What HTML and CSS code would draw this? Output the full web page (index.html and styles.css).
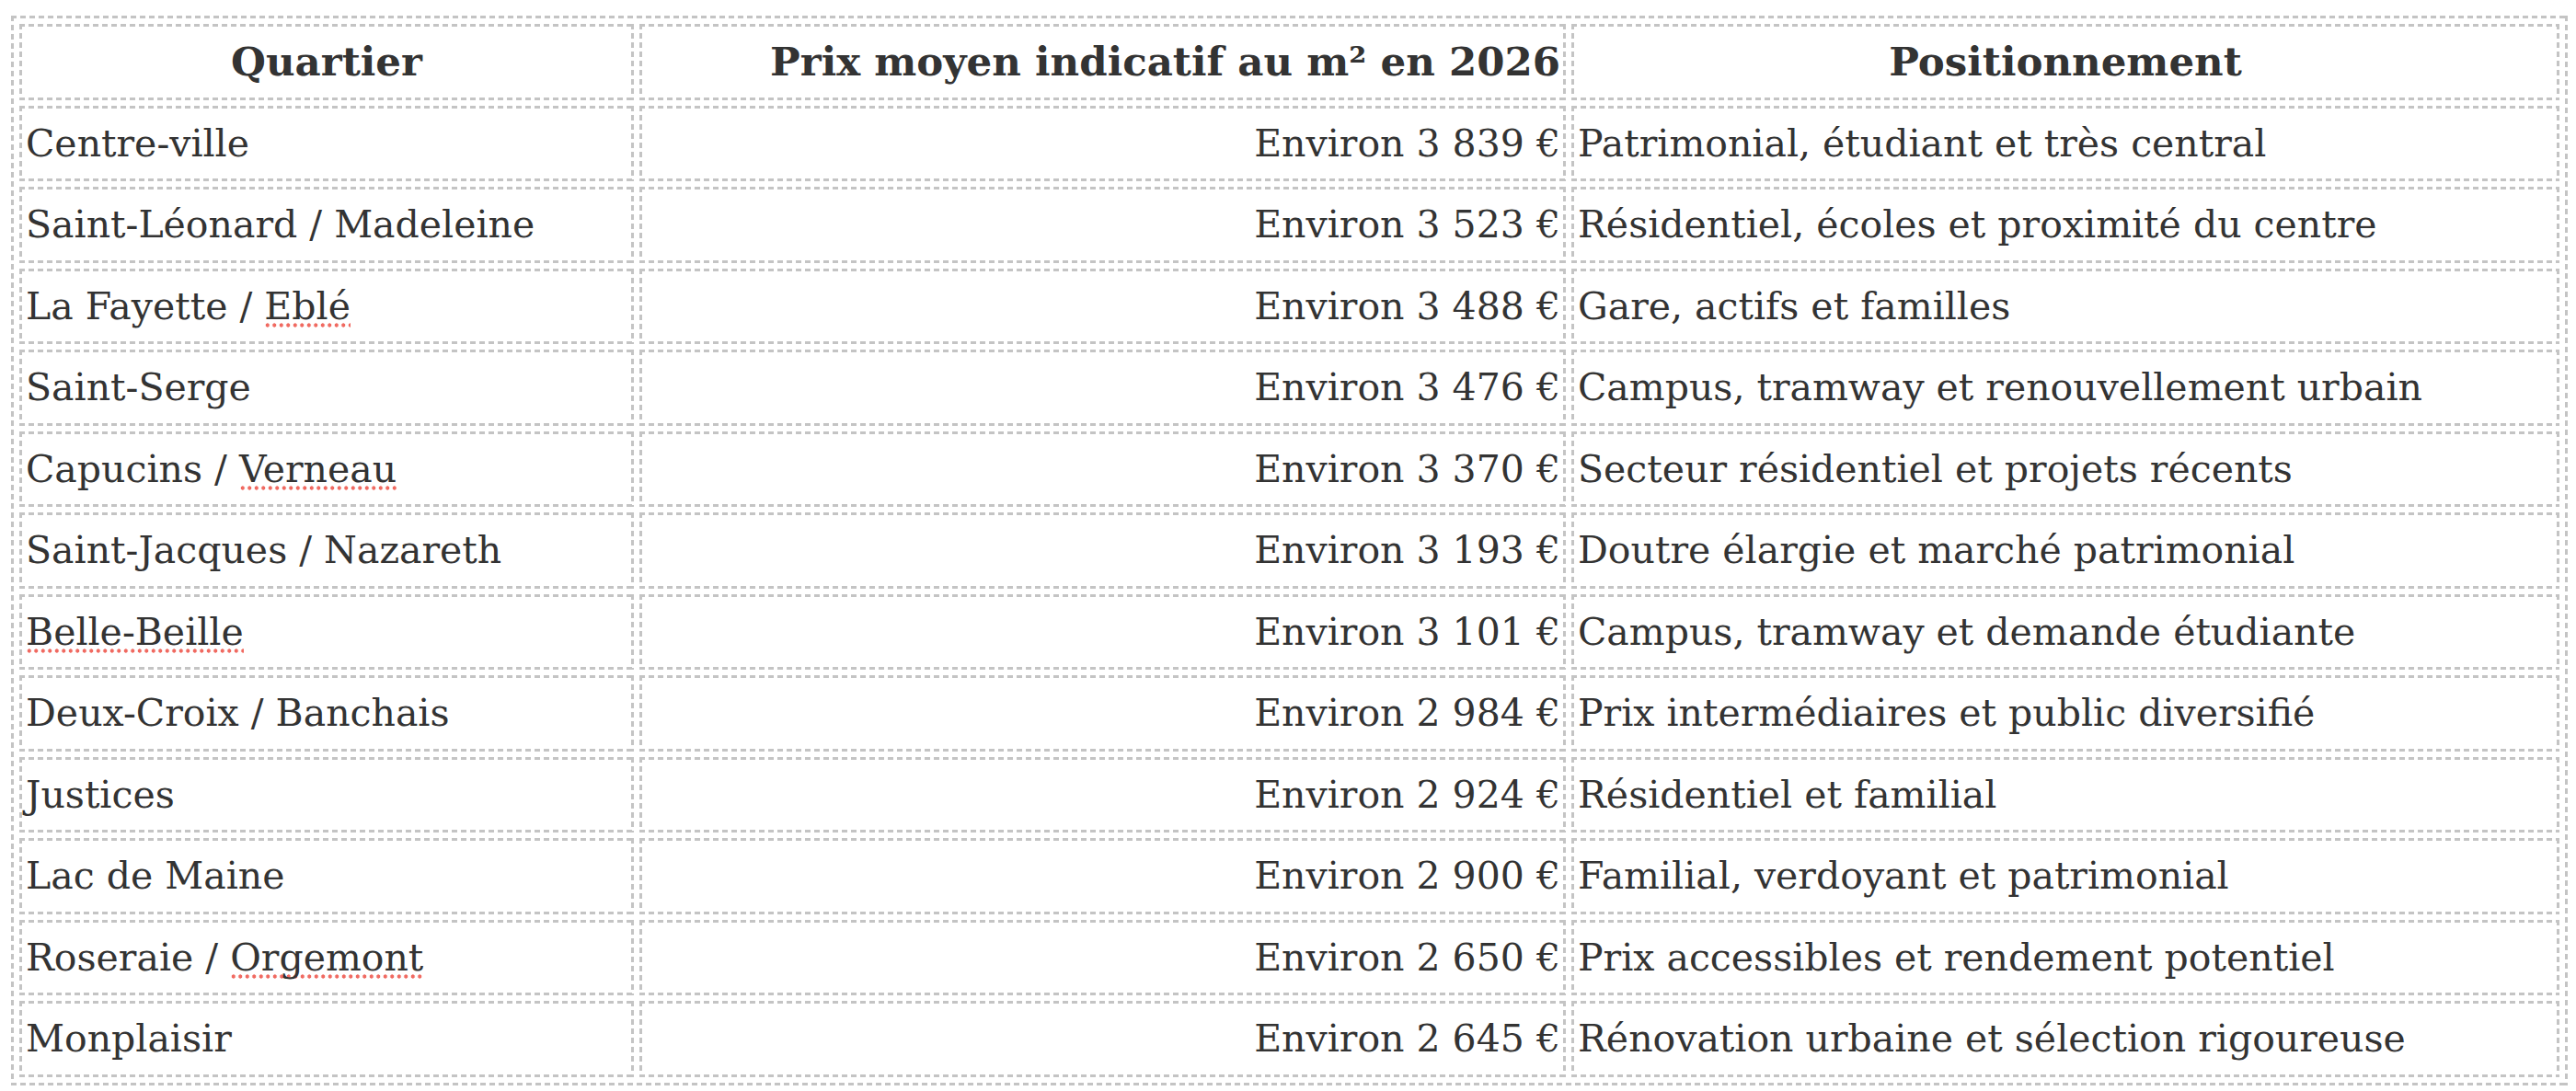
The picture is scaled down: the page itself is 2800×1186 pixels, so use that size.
FILE: index.html
```html
<!DOCTYPE html>
<html lang="fr">
<head>
<meta charset="utf-8">
<title>Prix au m² par quartier</title>
<link rel="stylesheet" href="styles.css">
</head>
<body>
<table class="prices">
  <thead>
    <tr>
      <th class="col-q">Quartier</th>
      <th class="col-p num">Prix moyen indicatif au m² en 2026</th>
      <th class="col-d">Positionnement</th>
    </tr>
  </thead>
  <tbody>
    <tr><td>Centre-ville</td><td class="num">Environ 3&nbsp;839&nbsp;€</td><td>Patrimonial, étudiant et très central</td></tr>
    <tr><td>Saint-Léonard / Madeleine</td><td class="num">Environ 3&nbsp;523&nbsp;€</td><td>Résidentiel, écoles et proximité du centre</td></tr>
    <tr><td>La Fayette / <span class="sp">Eblé</span></td><td class="num">Environ 3&nbsp;488&nbsp;€</td><td>Gare, actifs et familles</td></tr>
    <tr><td>Saint-Serge</td><td class="num">Environ 3&nbsp;476&nbsp;€</td><td>Campus, tramway et renouvellement urbain</td></tr>
    <tr><td>Capucins / <span class="sp">Verneau</span></td><td class="num">Environ 3&nbsp;370&nbsp;€</td><td>Secteur résidentiel et projets récents</td></tr>
    <tr><td>Saint-Jacques / Nazareth</td><td class="num">Environ 3&nbsp;193&nbsp;€</td><td>Doutre élargie et marché patrimonial</td></tr>
    <tr><td><span class="sp">Belle-Beille</span></td><td class="num">Environ 3&nbsp;101&nbsp;€</td><td>Campus, tramway et demande étudiante</td></tr>
    <tr><td>Deux-Croix / Banchais</td><td class="num">Environ 2&nbsp;984&nbsp;€</td><td>Prix intermédiaires et public diversifié</td></tr>
    <tr><td>Justices</td><td class="num">Environ 2&nbsp;924&nbsp;€</td><td>Résidentiel et familial</td></tr>
    <tr><td>Lac de Maine</td><td class="num">Environ 2&nbsp;900&nbsp;€</td><td>Familial, verdoyant et patrimonial</td></tr>
    <tr><td>Roseraie / <span class="sp">Orgemont</span></td><td class="num">Environ 2&nbsp;650&nbsp;€</td><td>Prix accessibles et rendement potentiel</td></tr>
    <tr><td>Monplaisir</td><td class="num">Environ 2&nbsp;645&nbsp;€</td><td>Rénovation urbaine et sélection rigoureuse</td></tr>
  </tbody>
</table>
</body>
</html>
```

FILE: styles.css
```css
html, body {
  background: #ffffff;
}

body {
  margin: 17px 9px 0 12px;
  font-family: "DejaVu Serif", "Liberation Serif", serif;
  font-size: 41px;
  color: #333333;
}

/* dashed frame: 6px dash, 4px gap, 3px thick (drawn with gradients) */
.prices,
.prices th,
.prices td {
  --dash: #c4c4c4;
  border: 3px solid transparent;
  background-image:
    repeating-linear-gradient(to right, var(--dash) 0 6px, transparent 6px 10px),
    repeating-linear-gradient(to right, var(--dash) 0 6px, transparent 6px 10px),
    repeating-linear-gradient(to bottom, var(--dash) 0 6px, transparent 6px 10px),
    repeating-linear-gradient(to bottom, var(--dash) 0 6px, transparent 6px 10px);
  background-size: 100% 3px, 100% 3px, 3px 100%, 3px 100%;
  background-position: left top, left bottom, left top, right top;
  background-repeat: no-repeat;
  background-origin: border-box;
  background-clip: border-box;
}

.prices {
  width: 100%;
  table-layout: fixed;
  border-spacing: 6px;
  padding: 0;
}

.prices th,
.prices td {
  box-sizing: border-box;
  padding: 0 4px;
  height: 82.5px;
  line-height: 48px;
  vertical-align: middle;
  white-space: nowrap;
  text-align: left;
}

.prices th {
  font-size: 43.5px;
  font-weight: bold;
  text-align: center;
}

.prices .col-q { width: 668px; }
.prices .col-p { width: 1007px; }
.prices .col-d { width: 1074px; }

.prices .num {
  text-align: right;
  padding-right: 3px;
}

.sp {
  background-image: radial-gradient(circle, #f06a61 0 1.9px, rgba(240, 106, 97, 0) 2.4px);
  background-size: 7.5px 5px;
  background-repeat: repeat-x;
  background-position: 0 calc(100% - 1px);
}
```
